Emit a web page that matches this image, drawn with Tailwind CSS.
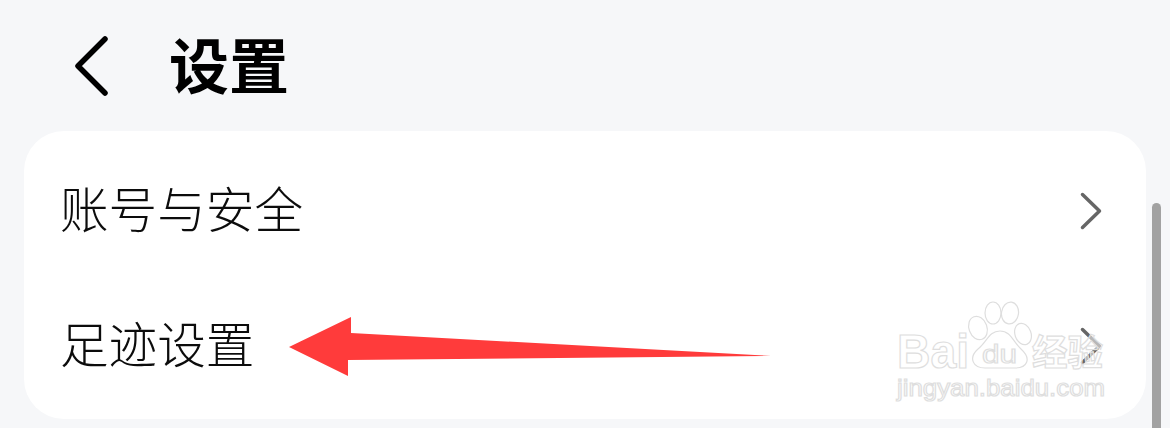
<!DOCTYPE html>
<html lang="zh-CN">
<head>
    <meta charset="UTF-8">
    <title>设置</title>
    <script src="https://cdn.jsdelivr.net/npm/@tailwindcss/browser@4"></script>
</head>
<body class="bg-[#f6f7f9] overflow-hidden font-['Noto_Sans_CJK_SC','Noto_Sans',sans-serif]">
    <div class="relative w-[1170px] h-[428px] overflow-hidden">
        <!-- Header -->
        <header class="flex items-center h-[131px] pl-[72px]">
            <svg class="w-[40px] h-[64px]" viewBox="0 0 40 64" fill="none" stroke="#000" stroke-width="5.5" stroke-linecap="round" stroke-linejoin="round">
                <path d="M33 5 L6 32 L33 59"/>
            </svg>
            <h1 class="ml-[57px] mb-[5px] text-[60px] leading-none font-bold text-black">设置</h1>
        </header>

        <!-- Card -->
        <main class="mx-[24px] w-[1122px] h-[288px] bg-white rounded-[40px] pt-[12px]">
            <div class="flex items-center justify-between h-[135px] pl-[36px] pr-[44px]">
                <span class="mb-[7px] text-[48.6px] leading-none font-light text-[#0c0c0c]">账号与安全</span>
                <svg class="w-[22px] h-[38px]" viewBox="0 0 22 38" fill="none" stroke="#666" stroke-width="3.5" stroke-linecap="round" stroke-linejoin="round">
                    <path d="M2.5 2.5 L19.5 19 L2.5 35.5"/>
                </svg>
            </div>
            <div class="flex items-center justify-between h-[135px] pl-[36px] pr-[44px]">
                <span class="mb-[7px] text-[48.6px] leading-none font-light text-[#0c0c0c]">足迹设置</span>
                <svg class="w-[22px] h-[38px]" viewBox="0 0 22 38" fill="none" stroke="#666" stroke-width="3.5" stroke-linecap="round" stroke-linejoin="round">
                    <path d="M2.5 2.5 L19.5 19 L2.5 35.5"/>
                </svg>
            </div>
        </main>

        <!-- Scrollbar -->
        <div class="absolute left-[1152px] top-[203px] w-[9px] h-[240px] rounded-full bg-[#a2a2a2]"></div>

        <!-- Red annotation arrow -->
        <svg class="absolute left-0 top-0 pointer-events-none" width="1170" height="428" viewBox="0 0 1170 428">
            <polygon fill="#ff3b3b" points="289,347 351,317 351,333 771,356 348,360 348,376"/>
        </svg>

        <!-- Watermark -->
        <svg class="absolute left-0 top-0 pointer-events-none" width="1170" height="428" viewBox="0 0 1170 428" fill="#fff" fill-opacity="0.55" stroke="#dedede" stroke-width="1.2">
            <text x="897" y="368" font-family="Liberation Sans" font-size="48" font-weight="bold" textLength="72" lengthAdjust="spacingAndGlyphs">Bai</text>
            <ellipse cx="978" cy="328" rx="9" ry="12" transform="rotate(-20 978 328)"/>
            <ellipse cx="993" cy="313" rx="8" ry="11"/>
            <ellipse cx="1010" cy="313" rx="8.5" ry="11" transform="rotate(8 1010 313)"/>
            <ellipse cx="1023" cy="334" rx="8" ry="11" transform="rotate(-20 1023 334)"/>
            <path d="M1000 331 C1011 331 1013 342 1021 349 C1032 359 1027 368 1015 368 L985 368 C973 368 968 358 978 349 C987 342 989 331 1000 331 Z"/>
            <text x="982" y="363" font-family="Liberation Sans" font-size="26" textLength="35" lengthAdjust="spacingAndGlyphs">du</text>
            <text x="1032" y="366" font-family="Noto Sans CJK SC" font-size="36" font-weight="bold" textLength="71" lengthAdjust="spacingAndGlyphs">经验</text>
            <text x="897" y="396" font-family="Liberation Sans" font-size="24" textLength="208" lengthAdjust="spacingAndGlyphs">jingyan.baidu.com</text>
        </svg>
    </div>
</body>
</html>
